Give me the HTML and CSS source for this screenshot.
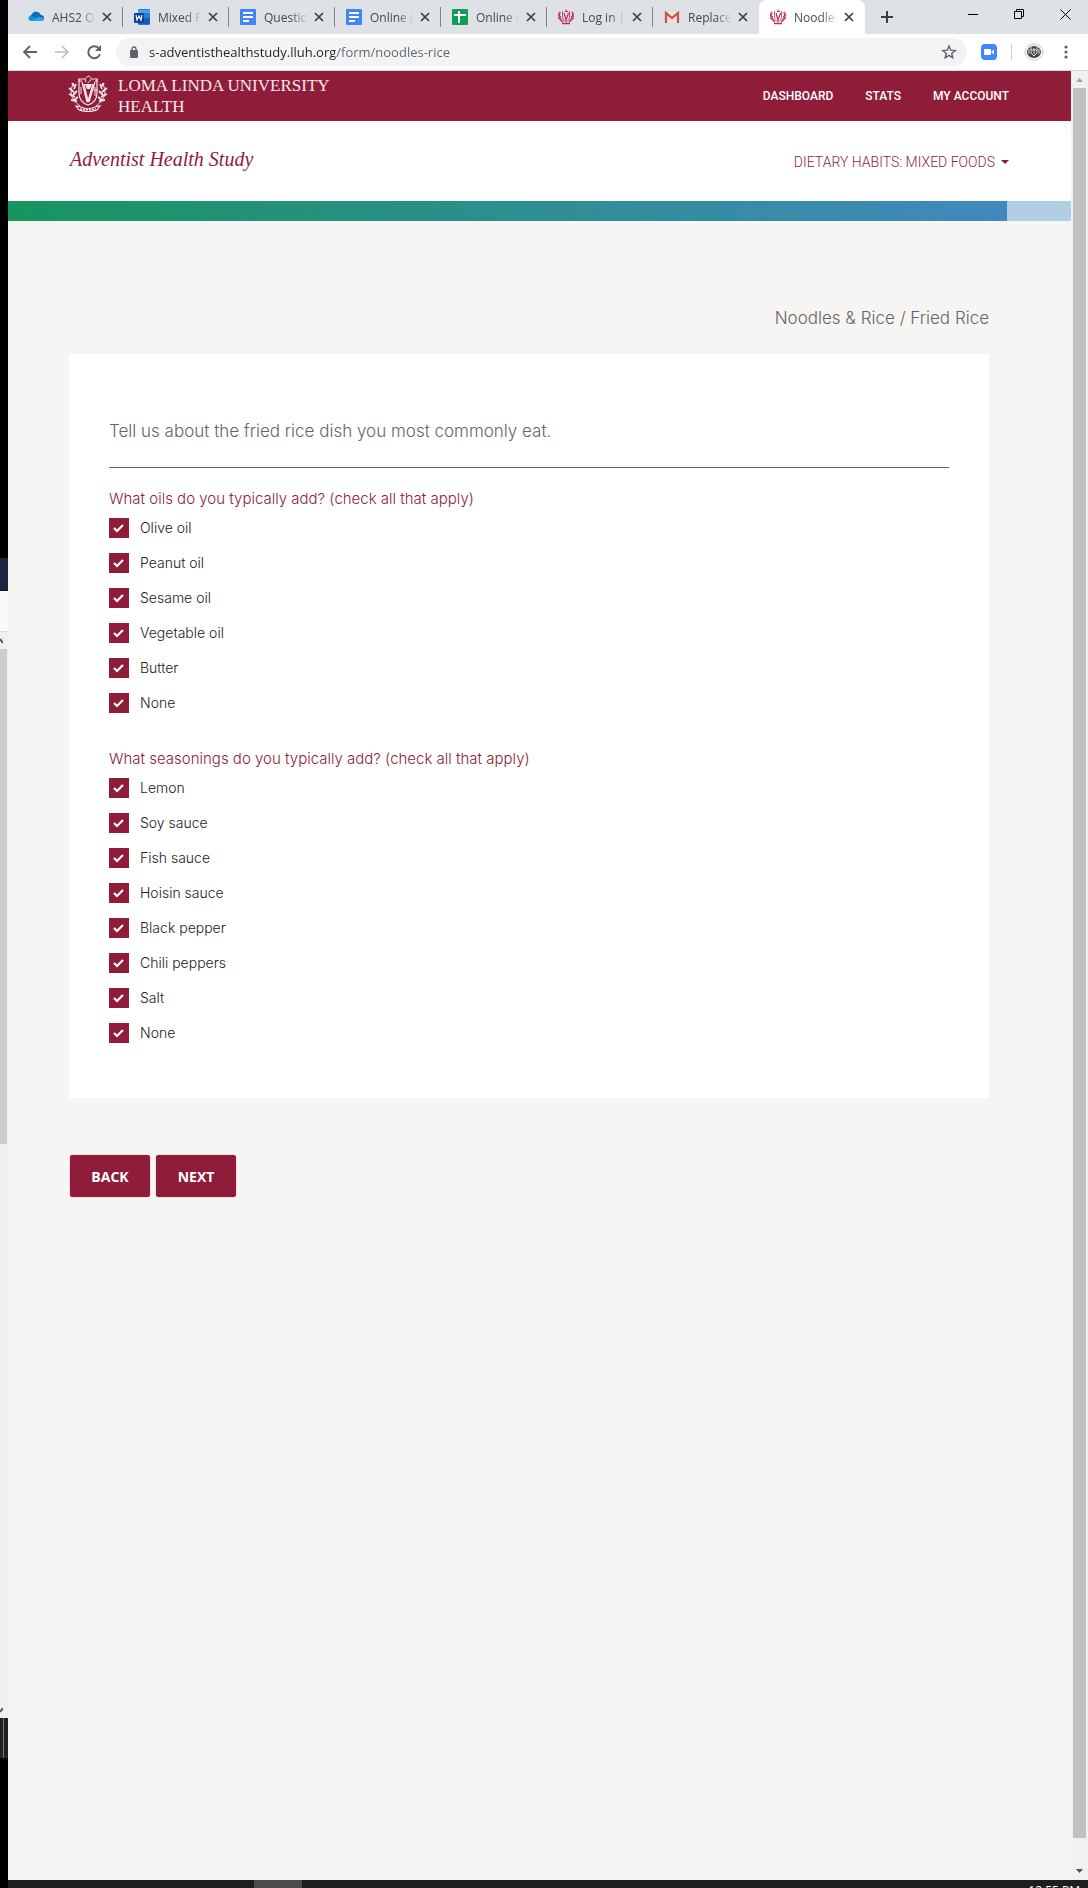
FILE: index.html
```
<!doctype html>
<html lang="en">
<head>
  <meta charset="UTF-8">
  <meta name="viewport" content="width=device-width, initial-scale=1.0">
  <title>Noodles &amp; Rice | Adventist Health Study</title>
  <link rel="stylesheet" href="styles.css">
</head>
<body>
<svg class="defs" aria-hidden="true">
  <symbol id="seal" viewBox="0 0 40 38">
    <g fill="none" stroke="currentColor">
      <path d="M11 5v14c0 6 3 10 9 12 6-2 9-6 9-12V5" stroke-width="1.2"/>
      <path d="M10 5h7M24 5h6M10 7h4M27 7h3" stroke-width="1.2"/>
      <path d="M16 10l4 17 5-17M14 8l5 20M27 8l-6 20" stroke-width="1.200"/>
      <path d="M27 13v9M25.500 16h4M13 13v7" stroke-width="1"/>
      <path d="M18 8c-2-3 0-5 3-6 0 1 3 1 2 4-1 1-2 1-3 3" stroke-width="1"/>
      <path d="M6 9C1 16 2 25 12 32M34 9c5 7 4 16-6 23" stroke-width="1"/>
      <path d="M4 9l3 4M1 14l5 4M1 20l6 3M3 26l6 1M8 10l-2 5M9 17l-4 4M10 23l-4 3M36 9l-3 4M39 14l-5 4M39 20l-6 3M37 26l-6 1M32 10l2 5M31 17l4 4M30 23l4 3" stroke-width="1.800"/>
      <path d="M8 32l5 1c4 2 10 2 14 0l5-1-3 4c-6 2-12 2-18 0z" stroke-width="1.2"/>
      <path d="M12 35c5 1 11 1 16 0" stroke-width="1.4" stroke-dasharray="2 1"/>
    </g>
    <path d="M17 10h7l-2 5h-3z" fill="currentColor"/>
  </symbol>
  <symbol id="crest" viewBox="0 0 16 16">
    <g fill="none" stroke="currentColor">
      <path d="M4.500 2v6c0 2 1.500 4 3.500 5 2-1 3.500-3 3.500-5V2M7 1h2" stroke-width=".8"/>
      <path d="M6 4l2 7 2.500-7M7 2.500h3" stroke-width="1.200"/>
      <path d="M2 3C0 7 1 10 5 13M14 3c2 4 1 7-3 10" stroke-width="2" opacity=".8"/>
      <path d="M0 5l3 3M0 9l3 1M16 5l-3 3M16 9l-3 1" stroke-width="1"/>
      <path d="M4 14.500h8" stroke-width="1.500"/>
    </g>
  </symbol>
  <symbol id="doc" viewBox="0 0 16 16">
    <rect width="16" height="16" rx="1" fill="#4285f4"/>
    <path d="M3 4h10M3 8h10M3 12h6" stroke="#fff" stroke-width="2"/>
  </symbol>
  <symbol id="x" viewBox="0 0 10 10">
    <path d="M1 1l8 8M9 1L1 9" stroke="currentColor" stroke-width="1.700"/>
  </symbol>
</svg>
<div class="desktop">
  <!-- windows behind the browser -->
  <aside class="behind">
    <div class="behind-black"></div>
    <div class="behind-navy"></div>
    <div class="behind-white"></div>
    <div class="behind-arrow"><svg width="3" height="6" viewBox="0 0 3 6"><path d="M0 1l3 4" stroke="#555" stroke-width="2"/></svg></div>
    <div class="behind-track"><div class="behind-thumb"></div></div>
    <div class="behind-arrow"><svg width="3" height="6" viewBox="0 0 3 6"><path d="M0 5l3-4" stroke="#555" stroke-width="2"/></svg></div>
    <div class="behind-dark"></div>
    <div class="behind-end"></div>
  </aside>

  <div class="browser">
    <div class="tabs">
      <div class="tab">
        <svg class="favicon" viewBox="0 0 16 16"><path d="M4 12a4 4 0 0 1 0-7 5 5 0 0 1 9 1 3 3 0 0 1 0 6z" fill="#0a6fc2"/><path d="M1 11c-2-4 2-5 3-4l8 5H3z" fill="#1490df"/><path d="M4 12l6-4 5 1c1 2 0 3-2 3z" fill="#28a8ea"/></svg>
        <button class="tab-title">AHS2 O</button>
        <button class="close" aria-label="Close tab"><svg><use href="#x"/></svg></button>
      </div>
      <div class="tab">
        <svg class="favicon" viewBox="0 0 16 16"><rect x="4" y="0" width="12" height="16" rx="1" fill="#2b7cd3"/><path d="M4 1h12v3H4z" fill="#41a5ee"/><path d="M4 9h12v6H4z" fill="#185abd"/><rect y="4" width="10" height="10" rx="1" fill="#103f91"/><path d="M2 6l1 5 2-4 2 4 1-5" fill="none" stroke="#fff" stroke-width="1.200"/></svg>
        <button class="tab-title">Mixed F</button>
        <button class="close" aria-label="Close tab"><svg><use href="#x"/></svg></button>
      </div>
      <div class="tab">
        <svg class="favicon"><use href="#doc"/></svg>
        <button class="tab-title">Questio</button>
        <button class="close" aria-label="Close tab"><svg><use href="#x"/></svg></button>
      </div>
      <div class="tab">
        <svg class="favicon"><use href="#doc"/></svg>
        <button class="tab-title">Online (</button>
        <button class="close" aria-label="Close tab"><svg><use href="#x"/></svg></button>
      </div>
      <div class="tab">
        <svg class="favicon" viewBox="0 0 16 16"><rect width="16" height="16" rx="1" fill="#0f9d58"/><path d="M2 6h12M7 2v12" stroke="#fff" stroke-width="2"/></svg>
        <button class="tab-title">Online (</button>
        <button class="close" aria-label="Close tab"><svg><use href="#x"/></svg></button>
      </div>
      <div class="tab">
        <svg class="favicon crest"><use href="#crest"/></svg>
        <button class="tab-title">Log in |</button>
        <button class="close" aria-label="Close tab"><svg><use href="#x"/></svg></button>
      </div>
      <div class="tab last">
        <svg class="favicon" viewBox="0 0 16 16"><path d="M2 3h12v11H2z" fill="#e8e4e2"/><path d="M2 14V4l6 5 6-5v10" fill="none" stroke="#d54b3d" stroke-width="2.200"/></svg>
        <button class="tab-title">Replace</button>
        <button class="close" aria-label="Close tab"><svg><use href="#x"/></svg></button>
      </div>
      <div class="tab active">
        <svg class="favicon crest"><use href="#crest"/></svg>
        <button class="tab-title">Noodles</button>
        <button class="close" aria-label="Close tab"><svg><use href="#x"/></svg></button>
      </div>
      <button class="new-tab" aria-label="New tab"><svg width="12" height="12" viewBox="0 0 12 12"><path d="M6 0v12M0 6h12" stroke="#3c4043" stroke-width="2"/></svg></button>
      <div class="window-buttons">
        <button aria-label="Minimize"><svg width="10" height="10" viewBox="0 0 10 10"><path d="M0 5.500h10" stroke="#000"/></svg></button>
        <button aria-label="Restore"><svg width="10" height="10" viewBox="0 0 10 10" fill="none" stroke="#000"><path d="M.5 2.500h7v7h-7zM2.500 2V.5h7v7H8"/></svg></button>
        <button aria-label="Close"><svg width="11" height="11" viewBox="0 0 11 11"><path d="M.5.5l10 10M10.500.5l-10 10" stroke="#000"/></svg></button>
      </div>
    </div>

    <div class="toolbar">
      <button aria-label="Back"><svg width="16" height="16" viewBox="0 0 16 16"><path d="M15 8H2M8 2L2 8l6 6" fill="none" stroke="#5f6368" stroke-width="1.800"/></svg></button>
      <button aria-label="Forward"><svg width="16" height="16" viewBox="0 0 16 16"><path d="M1 8h13M8 2l6 6-6 6" fill="none" stroke="#babcbe" stroke-width="1.500"/></svg></button>
      <button aria-label="Reload"><svg width="16" height="16" viewBox="0 0 16 16"><path d="M13 4.500A6 6 0 1 0 14 10" fill="none" stroke="#5f6368" stroke-width="2"/><path d="M15 1v6H9z" fill="#5f6368"/></svg></button>
      <div class="omnibox">
        <svg width="10" height="13" viewBox="0 0 10 13"><rect x="1" y="4" width="8" height="8" rx="1" fill="#5f6368"/><path d="M3 5V3a2 2 0 0 1 4 0v2" fill="none" stroke="#5f6368" stroke-width="1.300"/></svg>
        <input class="url" type="text" aria-label="Address" value="s-adventisthealthstudy.lluh.org/form/noodles-rice">
        <button aria-label="Bookmark"><svg width="16" height="16" viewBox="0 0 16 16"><path d="M8 2l1.700 4.200 4.500.3-3.500 2.900 1.100 4.400L8 11.400l-3.800 2.400 1.100-4.400L1.800 6.500l4.500-.3z" fill="none" stroke="#5f6368" stroke-width="1.400"/></svg></button>
      </div>
      <button class="zoom" aria-label="Zoom"><svg width="16" height="16" viewBox="0 0 16 16"><rect width="16" height="16" rx="4" fill="#4087fc"/><rect x="3" y="5" width="7" height="6" rx="1" fill="#fff"/><path d="M10.500 7.500L13 5.500v5l-2.500-2z" fill="#fff"/></svg></button>
      <span class="divider"></span>
      <button class="profile" aria-label="Profile"><svg width="20" height="18" viewBox="0 0 20 18"><ellipse cx="10" cy="9" rx="9" ry="8" fill="#f4f4f4" stroke="#999" stroke-dasharray="1 1"/><ellipse cx="10" cy="9" rx="7" ry="6" fill="#444"/><path d="M7 4v6l3 3 3-3V4M10 5v6M5 6v5M15 6v5M7 7h6" fill="none" stroke="#ddd"/></svg></button>
      <button class="more" aria-label="Menu"><svg width="4" height="14" viewBox="0 0 4 14" fill="#5f6368"><circle cx="2" cy="2" r="1.600"/><circle cx="2" cy="7" r="1.600"/><circle cx="2" cy="12" r="1.600"/></svg></button>
    </div>

    <div class="viewport">
      <div class="page">
        <header class="topbar">
          <a class="logo" href="#">
            <svg width="40" height="38"><use href="#seal"/></svg>
            <span>LOMA LINDA UNIVERSITY<br>HEALTH</span>
          </a>
          <nav>
            <a href="#">DASHBOARD</a>
            <a href="#">STATS</a>
            <a href="#">MY ACCOUNT</a>
          </nav>
        </header>
        <div class="subheader">
          <a class="study" href="#">Adventist Health Study</a>
          <button class="section-menu">DIETARY HABITS: MIXED FOODS <span class="caret"></span></button>
        </div>
        <div class="progress"><div class="progress-bar" style="width: 94%"></div></div>

        <main>
          <h1>Noodles &amp; Rice / Fried Rice</h1>
          <form id="form" class="card">
            <p class="intro">Tell us about the fried rice dish you most commonly eat.</p>
            <fieldset>
              <legend>What oils do you typically add? (check all that apply)</legend>
              <label><input type="checkbox" checked>Olive oil</label>
              <label><input type="checkbox" checked>Peanut oil</label>
              <label><input type="checkbox" checked>Sesame oil</label>
              <label><input type="checkbox" checked>Vegetable oil</label>
              <label><input type="checkbox" checked>Butter</label>
              <label><input type="checkbox" checked>None</label>
            </fieldset>
            <fieldset>
              <legend>What seasonings do you typically add? (check all that apply)</legend>
              <label><input type="checkbox" checked>Lemon</label>
              <label><input type="checkbox" checked>Soy sauce</label>
              <label><input type="checkbox" checked>Fish sauce</label>
              <label><input type="checkbox" checked>Hoisin sauce</label>
              <label><input type="checkbox" checked>Black pepper</label>
              <label><input type="checkbox" checked>Chili peppers</label>
              <label><input type="checkbox" checked>Salt</label>
              <label><input type="checkbox" checked>None</label>
            </fieldset>
          </form>
          <div class="buttons">
            <button type="button">BACK</button>
            <button type="submit" form="form">NEXT</button>
          </div>
        </main>
      </div>
      <div class="scrollbar">
        <svg width="7" height="4" viewBox="0 0 7 4"><path d="M0 4l3.500-4L7 4z" fill="#a3a3a3"/></svg>
        <div class="thumb"></div>
        <svg width="7" height="4" viewBox="0 0 7 4"><path d="M0 0l3.500 4L7 0z" fill="#505050"/></svg>
      </div>
    </div>
    <footer class="taskbar">
      <div class="task"></div>
      <time>12:55 PM</time>
    </footer>
  </div>
</div>
</body>
</html>
```
FILE: styles.css
```
html, body { margin: 0; padding: 0; }
* { box-sizing: border-box; }
body { font-family: Inter, "Liberation Sans", sans-serif; font-weight: 300; }
button { border: 0; padding: 0; background: none; font: inherit; cursor: pointer; }
a { text-decoration: none; }
svg { display: block; }
.defs { width: 0; height: 0; position: absolute; }

.desktop { display: flex; height: 100vh; overflow: hidden; }

/* strip of other windows */
.behind { width: 8px; flex: none; display: flex; flex-direction: column; background: #f0f0f0; }
.behind-black { height: 558px; background: #000; }
.behind-navy { height: 33px; background: #20233f; border-bottom: 1px solid #0d0f2b; }
.behind-white { height: 41px; background: #fafafa; border-bottom: 1px solid #ddd; }
.behind-arrow { height: 17px; padding-top: 6px; }
.behind-track { flex: 1; }
.behind-thumb { width: 7px; height: 495px; background: #cdcdcd; }
.behind-dark { height: 40px; background: linear-gradient(90deg, #1f1f1f 3px, #777 3px, #777 4px, #1f1f1f 4px); }
.behind-end { height: 130px; background: #000; }

.browser { flex: 1; min-width: 0; display: flex; flex-direction: column; }

/* tab strip */
.tabs { height: 34px; flex: none; display: flex; align-items: center; padding-left: 9px; background: #dee1e6; font: 12px "Open Sans", "Noto Sans", sans-serif; color: #45494d; }
.tab { width: 106px; height: 20px; flex: 0 1 auto; display: flex; align-items: center; padding: 0 10px 0 11px; border-right: 1px solid #808387; }
.tab.last { border-color: transparent; }
.tab.active { height: 34px; padding-right: 11px; background: #fff; border: 0; border-radius: 8px 8px 0 0; }
.favicon { width: 16px; height: 16px; flex: none; margin-right: 8px; }
.crest { color: #b92d55; }
.tab-title { flex: 1; min-width: 0; height: 20px; white-space: nowrap; text-align: left; color: inherit; -webkit-mask-image: linear-gradient(90deg, #000 65%, transparent 105%); mask-image: linear-gradient(90deg, #000 65%, transparent 105%); }
.close { margin-left: 8px; color: #3c4043; }
.close svg { width: 10px; height: 10px; }
.new-tab { margin-left: 16px; }
.window-buttons { margin-left: auto; display: flex; gap: 36px; padding: 0 17px 6px 0; }

.toolbar { height: 37px; flex: none; display: flex; align-items: center; gap: 16px; padding: 0 20px 0 14px; background: #fff; border-bottom: 1px solid #d5d7da; }
.omnibox { flex: 1; height: 28px; display: flex; align-items: center; gap: 10px; margin-left: -2px; padding: 0 10px 0 13px; border-radius: 14px; background: #f1f3f4; }
.url { flex: 1; min-width: 0; border: 0; outline: 0; padding: 0; font: 13px "Open Sans", "Noto Sans", sans-serif; color: transparent; background: linear-gradient(90deg, #202124 186px, #5f6368 186px); -webkit-background-clip: text; background-clip: text; }
.zoom { margin-left: -2px; }
.divider { width: 1px; height: 16px; margin-left: -2px; background: #c8cacd; }
.profile { margin-left: -4px; }
.more { margin-left: 4px; }

/* page */
.viewport { flex: 1; min-height: 0; display: flex; }
.page { flex: 1; min-width: 0; overflow: hidden; background: #f6f5f3; }
.topbar { height: 50px; display: flex; align-items: center; justify-content: space-between; padding: 0 62px 0 60px; background: #8f1c39; }
.logo { display: flex; align-items: flex-start; gap: 10px; color: #f7e8ec; font: 17px/21px "Liberation Serif", serif; }
.logo svg { margin-top: -1px; }
.topbar nav { display: flex; gap: 32px; font: 500 12px Roboto, sans-serif; }
.topbar nav a { color: #fff; }
.subheader { height: 80px; display: flex; align-items: center; justify-content: space-between; padding: 0 62px; background: #fff; color: #8f1c39; }
.study { padding-bottom: 4px; color: inherit; font: italic 20px "Liberation Serif", serif; }
.section-menu { display: flex; align-items: center; gap: 6px; padding-top: 2px; color: inherit; font: 300 14px Roboto, sans-serif; }
.caret { border: 4px solid transparent; border-top-color: currentColor; border-bottom: 0; }
.progress { height: 20px; background: #b2cee3; }
.progress-bar { height: 100%; background: linear-gradient(90deg, #17955f, #4288bf); }

main { padding: 85px 82px 0 61px; color: #666; }
h1 { margin: 0 0 23px; text-align: right; font-size: 17px; font-weight: 300; line-height: 25px; }
.card { padding: 65px 40px 55px; background: #fff; }
.intro { margin: 0 0 18px; padding-bottom: 23px; border-bottom: 1px solid #666; font-size: 17px; line-height: 25px; }
fieldset { min-width: 0; margin: 0; padding: 0; border: 0; display: flex; flex-direction: column; gap: 15px; }
fieldset + fieldset { margin-top: 33px; }
legend { padding: 0; margin-bottom: 7px; font-size: 15px; line-height: 25px; color: #8f1c39; }
label { display: flex; align-items: center; gap: 11px; font-size: 14px; line-height: 20px; color: #222; }
label input { appearance: none; width: 20px; height: 20px; margin: 0; background: #fff; border: 1px solid #8f1c39; }
label input:checked { background: #8f1c39 url("data:image/svg+xml,%3Csvg xmlns='http://www.w3.org/2000/svg' viewBox='0 0 18 18'%3E%3Cpath d='M4 9l3 3 6-6' fill='none' stroke='white' stroke-width='2.200'/%3E%3C/svg%3E"); }
.buttons { display: flex; gap: 6px; margin-top: 57px; padding-left: 1px; }
.buttons button { width: 80px; height: 42px; border-radius: 3px; background: #8f1c39; box-shadow: 0 0 1px #8f1c39; color: #fff; font: bold 14px "Open Sans", sans-serif; }

.scrollbar { width: 17px; flex: none; display: flex; flex-direction: column; align-items: center; padding: 7px 0; background: #f1f1f1; }
.thumb { width: 13px; flex: 1; margin: 6px 0 31px; background: #c1c1c1; }
.taskbar { height: 8px; flex: none; display: flex; justify-content: space-between; padding: 0 8px 0 246px; overflow: hidden; background: #1e1e1e; }
.task { width: 48px; background: #4c4c4c; }
.taskbar time { padding-top: 2px; color: #fff; font: 12px "Open Sans", sans-serif; }
```
